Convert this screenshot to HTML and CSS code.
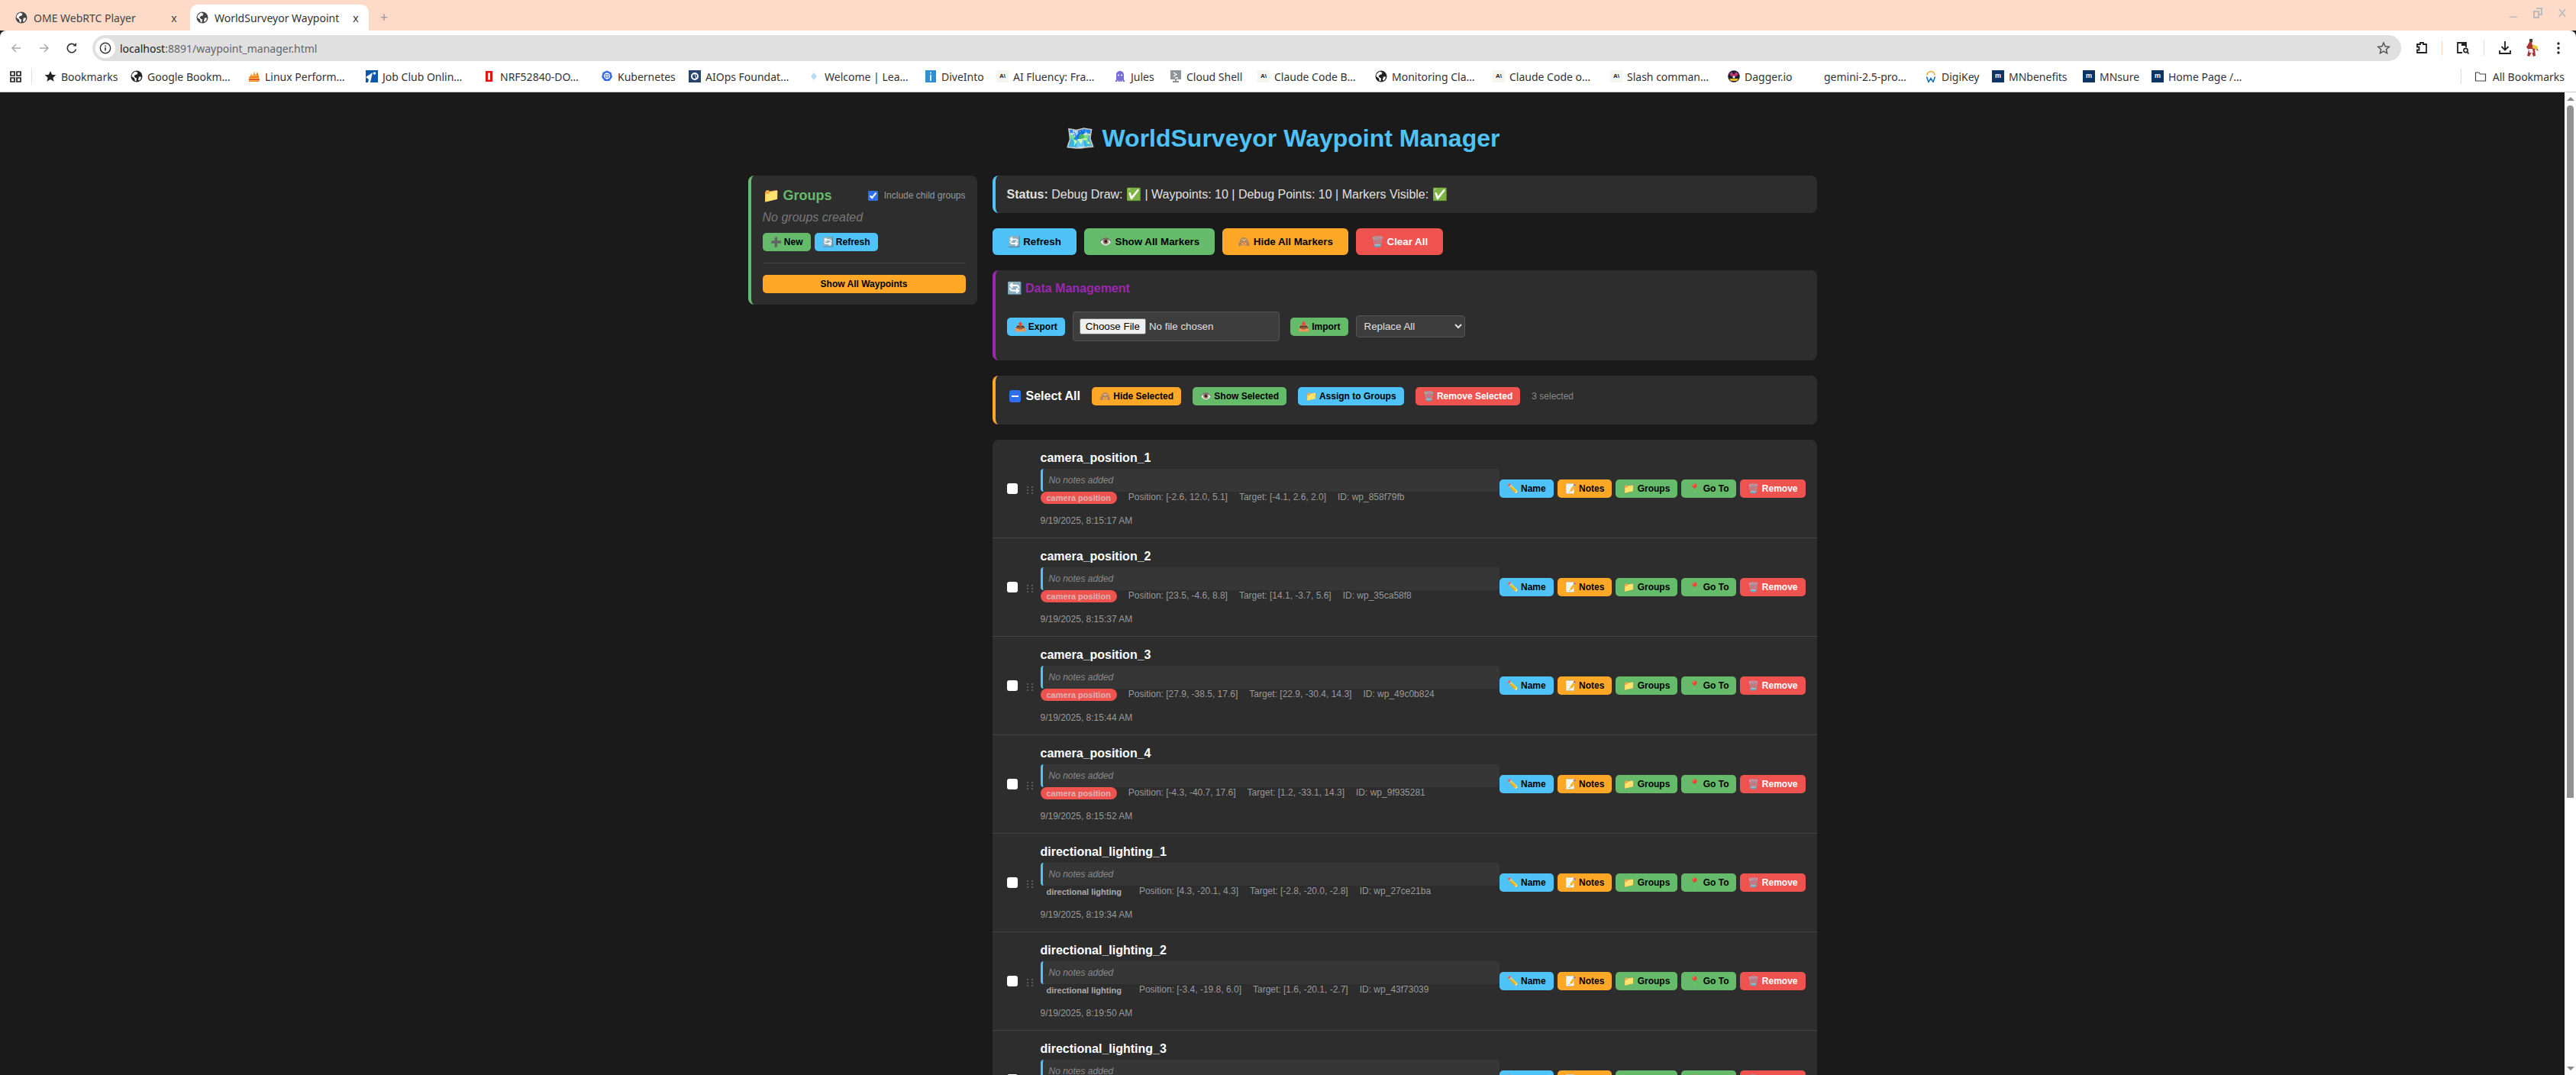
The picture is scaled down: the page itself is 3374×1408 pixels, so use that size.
FILE: index.html
```html
<!DOCTYPE html>
<html lang="en">
<head>
  <meta charset="UTF-8">
  <title>WorldSurveyor Waypoint Manager</title>
  <link rel="stylesheet" href="styles.css">
</head>
<body>
  <svg class="defs" width="0" height="0">
    <symbol id="globe" viewBox="0 0 16 16">
      <circle cx="8" cy="8" r="7.5" fill="currentColor"/>
      <path d="M6 1.5 9.5 3 8.5 5.5 6 6 4.5 8 6.5 10 8 10.5 7.5 14 6 14.500 5 10.500 1.500 8 2 5zM11 8.500h3l-.5 2.500-2 2.500-1.500-.5.500-2.500z" fill="#fff"/>
    </symbol>
    <symbol id="dots" viewBox="0 0 8 10">
      <path d="M0 0h2v2H0zM6 0h2v2H6zM0 4h2v2H0zM6 4h2v2H6zM0 8h2v2H0zM6 8h2v2H6z" fill="#5c5c5c"/>
    </symbol>
  </svg>

  <!-- browser chrome -->
  <div class="tabstrip">
    <div class="tab">
      <svg class="ico tab-ico"><use href="#globe"/></svg>
      <span class="tab-label">OME WebRTC Player</span>
      <span class="tab-x">x</span>
    </div>
    <div class="tab tab-active">
      <svg class="ico tab-ico"><use href="#globe"/></svg>
      <span class="tab-label">WorldSurveyor Waypoint</span>
      <span class="tab-x">x</span>
    </div>
    <span class="tab-new">+</span>
    <div class="winctl">
      <svg width="12" height="12" viewBox="0 0 12 12"><path d="M1 10.500h10v1.500H1z" fill="#bbb"/></svg>
      <svg width="12" height="14" viewBox="0 0 12 14"><path d="M4 1h7v8H8M1 5h6v8H1z" fill="none" stroke="#bbb" stroke-width="2"/></svg>
      <svg width="12" height="12" viewBox="0 0 12 12"><path d="M2 1l8 10M10 1 2 11" stroke="#bbb" stroke-width="1.600"/></svg>
    </div>
  </div>

  <div class="toolbar">
    <svg class="tool tool-back" width="16" height="16" viewBox="0 0 16 16"><path d="M14 8H3M8 3 3 8l5 5" fill="none" stroke="#aaa" stroke-width="1.500"/></svg>
    <svg class="tool tool-fwd" width="16" height="16" viewBox="0 0 16 16"><path d="M2 8h11M8 3l5 5-5 5" fill="none" stroke="#aaa" stroke-width="1.500"/></svg>
    <svg class="tool tool-reload" width="16" height="16" viewBox="0 0 16 16"><path d="M13.500 9.500A5.700 5.700 0 1 1 12 4" fill="none" stroke="#333" stroke-width="1.600"/><path d="M9.500 5.500h4.500V1z" fill="#333"/></svg>
    <div class="omnibox">
      <span class="site-info"><svg width="16" height="16" viewBox="0 0 16 16"><circle cx="8" cy="8" r="6.700" fill="none" stroke="#333" stroke-width="1.400"/><path d="M8 7v4.500M8 4.400v1.500" stroke="#333" stroke-width="1.500"/></svg></span>
      <span class="url"><span class="url-host">localhost</span>:8891/waypoint_manager.html</span>
      <svg class="omni-star" width="18" height="18" viewBox="0 0 18 18"><path d="M9 2l2.100 4.800 5.200.5-3.900 3.400 1.200 5.100L9 13.100l-4.600 2.700 1.200-5.100-3.900-3.400 5.200-.5z" fill="none" stroke="#555" stroke-width="1.500"/></svg>
    </div>
    <div class="tool-right">
      <svg width="16" height="18" viewBox="0 0 16 18"><path d="M2 4h4V2h4v2h4v11H2v-3.500h2.500v-4H2z" fill="none" stroke="#222" stroke-width="1.800"/></svg>
      <i class="tool-sep"></i>
      <svg width="18" height="18" viewBox="0 0 18 18"><path d="M8 15H2V2h11v6" fill="none" stroke="#222" stroke-width="1.800"/><circle cx="12.500" cy="12" r="2.600" fill="none" stroke="#222" stroke-width="1.600"/><path d="M14.500 14l2 2.500" stroke="#222" stroke-width="1.600"/><path d="M7 3h6v3H7z" fill="#222"/></svg>
      <i class="tool-sep"></i>
      <svg width="18" height="20" viewBox="0 0 18 20"><path d="M9 1v11M4.500 8 9 12.500 13.500 8M2 13v4h14v-4" fill="none" stroke="#222" stroke-width="1.800"/></svg>
      <svg class="avatar" width="20" height="26" viewBox="0 0 20 26"><path d="M8 1l3 3-1 4 6 3 3 6-5-3 1 9-3 1-2-6-3 6-3-1 2-8-3-3 4-7z" fill="#a33"/><path d="M11 8l7 3-1 4-6-2z" fill="#e8c830"/><path d="M7 1h4v4H7z" fill="#443"/><path d="M6 14h5l1 5H7z" fill="#eee"/></svg>
      <svg class="kebab" width="4" height="16" viewBox="0 0 4 16"><circle cx="2" cy="2" r="1.700" fill="#222"/><circle cx="2" cy="8" r="1.700" fill="#222"/><circle cx="2" cy="14" r="1.700" fill="#222"/></svg>
    </div>
  </div>

  <div class="bookmarks">
    <svg class="ico apps" viewBox="0 0 16 16"><path d="M2 2h5v5H2zM10 2h5v5h-5zM2 10h5v5H2zM10 10h5v5h-5z" fill="none" stroke="#222" stroke-width="1.700"/></svg>
    <i class="bm-sep"></i>
    <a class="bm bm-113"><svg class="ico" viewBox="0 0 16 16"><path d="M8 1l2.100 4.800 5.200.5-3.900 3.400 1.200 5.100L8 12.100l-4.600 2.700 1.200-5.100L.7 6.300l5.200-.5z" fill="#222"/></svg>Bookmarks</a>
    <a class="bm"><svg class="ico"><use href="#globe"/></svg>Google Bookm…</a>
    <a class="bm"><svg class="ico" viewBox="0 0 16 16"><path d="M1 15V9l2-1 1-4 1 3 2-1 1-5 1 5 2-1 1-3 1 3 1 3v7z" fill="#ef7d1f"/><path d="M1 10h14v1.500H1zM1 13h14v1H1zM4 6.500h8V8H4z" fill="#f5c242"/><path d="M1 11.500h14V13H1z" fill="#e0402b"/></svg>Linux Perform…</a>
    <a class="bm"><svg class="ico" viewBox="0 0 16 16"><path d="M0 0h16v16H0z" fill="#0b57a8"/><path d="M0 9l9-6-3 13H3l1-4z" fill="#fff"/><circle cx="11.500" cy="4" r="1.800" fill="#fff"/></svg>Job Club Onlin…</a>
    <a class="bm"><svg class="ico" viewBox="0 0 16 16"><path d="M3 1h9v14H3z" fill="#e8120c"/><path d="M6 3.500h3v9H6z" fill="#fff"/></svg>NRF52840-DO…</a>
    <a class="bm bm-115"><svg class="ico" viewBox="0 0 16 16"><path d="M8 .5l5.500 2.600 1.400 6-3.800 4.900H4.900L1.100 9.100l1.400-6z" fill="#326ce5"/><circle cx="8" cy="7.500" r="3.300" fill="none" stroke="#fff" stroke-width="1.200"/><path d="M8 3v9M3.800 7.500h8.400" stroke="#fff"/></svg>Kubernetes</a>
    <a class="bm bm-156"><svg class="ico" viewBox="0 0 16 16"><path d="M0 0h16v16H0z" fill="#26466d"/><circle cx="8" cy="8" r="4" fill="none" stroke="#fff" stroke-width="2"/><path d="M8 5l2 6" stroke="#fff"/></svg>AIOps Foundat…</a>
    <a class="bm bm-153"><svg class="ico" viewBox="0 0 16 16"><path d="M8 3l4 5-4 5-4-5z" fill="#bcdcf2"/></svg>Welcome | Lea…</a>
    <a class="bm bm-94"><svg class="ico" viewBox="0 0 16 16"><path d="M1 0h14v16H1z" fill="#2f8fd0"/><path d="M7.200 6h1.600v8H7.200zM7.200 2.500h1.600v2H7.200z" fill="#fff"/></svg>DiveInto</a>
    <a class="bm"><span class="ico ico-claude">A\</span>AI Fluency: Fra…</a>
    <a class="bm bm-73"><svg class="ico" viewBox="0 0 16 16"><path d="M8 1C4.500 1 3 3.500 3 6v6l-1.500 3h2.500l1-2 1 2h1.500l.5-2 .5 2h1.500l1-2 1 2h2.500L13 12V6c0-2.500-1.500-5-5-5z" fill="#7a6fd6"/><circle cx="6" cy="6.500" r="1" fill="#fff"/><circle cx="10" cy="6.500" r="1" fill="#fff"/></svg>Jules</a>
    <a class="bm bm-115"><svg class="ico" viewBox="0 0 16 16"><path d="M1 0h14v12H1zM7 12h2v2h3v2H4v-2h3z" fill="#8f9499"/><path d="M5 3l4 2.500L5 8M7 10h4" fill="none" stroke="#fff" stroke-width="1.300"/></svg>Cloud Shell</a>
    <a class="bm"><span class="ico ico-claude">A\</span>Claude Code B…</a>
    <a class="bm"><svg class="ico"><use href="#globe"/></svg>Monitoring Cla…</a>
    <a class="bm"><span class="ico ico-claude">A\</span>Claude Code o…</a>
    <a class="bm"><span class="ico ico-claude">A\</span>Slash comman…</a>
    <a class="bm bm-104"><svg class="ico" viewBox="0 0 16 16"><circle cx="8" cy="8" r="7.800" fill="#1d1d2b"/><path d="M2 5l3-3 3 4 3-4 3 3-3 3H5z" fill="#c4347a"/><path d="M2 11h12l-2 3H4z" fill="#e8b820"/><circle cx="8" cy="9" r="1.500" fill="#fff"/></svg>Dagger.io</a>
    <a class="bm"><span class="ico"></span>gemini-2.5-pro…</a>
    <a class="bm bm-88"><svg class="ico" viewBox="0 0 16 16"><path d="M3 6.500a5 5 0 0 1 10 0" fill="none" stroke="#f5a623" stroke-width="1.500"/><path d="M2.500 8.500l2.500 7 3-5 3 5 2.500-7" fill="none" stroke="#0b6fb8" stroke-width="1.500"/></svg>DigiKey</a>
    <a class="bm bm-119"><span class="ico ico-mn">m</span>MNbenefits</a>
    <a class="bm bm-90"><span class="ico ico-mn">m</span>MNsure</a>
    <a class="bm"><span class="ico ico-mn">m</span>Home Page /…</a>
    <div class="bm-all">
      <i class="bm-sep"></i>
      <svg class="ico" viewBox="0 0 16 16"><path d="M1.500 3h4.500l1.500 2h7v9h-13z" fill="none" stroke="#444" stroke-width="1.200"/></svg>
      All Bookmarks
    </div>
  </div>

  <div class="viewport">
    <div class="page">
      <h1 class="page-title">🗺️ WorldSurveyor Waypoint Manager</h1>

      <div class="layout">
        <aside class="sidebar">
          <div class="groups-head">
            <h3 class="groups-title">📁 Groups</h3>
            <label class="include-child"><input type="checkbox" checked> Include child groups</label>
          </div>
          <div class="no-groups">No groups created</div>
          <div class="groups-btns">
            <button class="btn btn-sm btn-green">➕ New</button>
            <button class="btn btn-sm btn-blue">🔄 Refresh</button>
          </div>
          <div class="groups-foot">
            <button class="btn btn-sm btn-orange btn-wide">Show All Waypoints</button>
          </div>
        </aside>

        <main class="main">
          <div class="status"><strong>Status:</strong> Debug Draw: ✅ | Waypoints: 10 | Debug Points: 10 | Markers Visible: ✅</div>

          <div class="controls">
            <button class="btn btn-blue">🔄 Refresh</button>
            <button class="btn btn-green">👁️ Show All Markers</button>
            <button class="btn btn-orange">🙈 Hide All Markers</button>
            <button class="btn btn-red">🗑️ Clear All</button>
          </div>

          <section class="data-mgmt">
            <h4 class="data-title">🔄 Data Management</h4>
            <div class="data-row">
              <button class="btn btn-sm btn-blue">📤 Export</button>
              <input class="file-input" type="file">
              <button class="btn btn-sm btn-green">📥 Import</button>
              <select class="mode-select"><option>Replace All</option></select>
            </div>
          </section>

          <div class="bulk">
            <input class="select-all" type="checkbox">
            <span class="select-all-label">Select All</span>
            <button class="btn btn-sm btn-orange">🙈 Hide Selected</button>
            <button class="btn btn-sm btn-green">👁️ Show Selected</button>
            <button class="btn btn-sm btn-blue">📁 Assign to Groups</button>
            <button class="btn btn-sm btn-red">🗑️ Remove Selected</button>
            <span class="sel-count">3 selected</span>
          </div>

          <div class="wp-list">
            <div class="wp">
              <input class="wp-check" type="checkbox">
              <svg class="wp-drag"><use href="#dots"/></svg>
              <div class="wp-body">
                <div class="wp-name">camera_position_1</div>
                <div class="wp-notes">No notes added</div>
                <div class="wp-meta">
                  <span class="wp-badge wp-badge-cam">camera position</span>
                  <span>Position: [-2.6, 12.0, 5.1]</span>
                  <span>Target: [-4.1, 2.6, 2.0]</span>
                  <span>ID: wp_858f79fb</span>
                  <span class="wp-date">9/19/2025, 8:15:17 AM</span>
                </div>
              </div>
              <div class="wp-actions">
                <button class="btn btn-sm btn-blue">✏️ Name</button>
                <button class="btn btn-sm btn-orange">📝 Notes</button>
                <button class="btn btn-sm btn-green">📁 Groups</button>
                <button class="btn btn-sm btn-green">📍 Go To</button>
                <button class="btn btn-sm btn-red">🗑️ Remove</button>
              </div>
            </div>

            <div class="wp">
              <input class="wp-check" type="checkbox">
              <svg class="wp-drag"><use href="#dots"/></svg>
              <div class="wp-body">
                <div class="wp-name">camera_position_2</div>
                <div class="wp-notes">No notes added</div>
                <div class="wp-meta">
                  <span class="wp-badge wp-badge-cam">camera position</span>
                  <span>Position: [23.5, -4.6, 8.8]</span>
                  <span>Target: [14.1, -3.7, 5.6]</span>
                  <span>ID: wp_35ca58f8</span>
                  <span class="wp-date">9/19/2025, 8:15:37 AM</span>
                </div>
              </div>
              <div class="wp-actions">
                <button class="btn btn-sm btn-blue">✏️ Name</button>
                <button class="btn btn-sm btn-orange">📝 Notes</button>
                <button class="btn btn-sm btn-green">📁 Groups</button>
                <button class="btn btn-sm btn-green">📍 Go To</button>
                <button class="btn btn-sm btn-red">🗑️ Remove</button>
              </div>
            </div>

            <div class="wp">
              <input class="wp-check" type="checkbox">
              <svg class="wp-drag"><use href="#dots"/></svg>
              <div class="wp-body">
                <div class="wp-name">camera_position_3</div>
                <div class="wp-notes">No notes added</div>
                <div class="wp-meta">
                  <span class="wp-badge wp-badge-cam">camera position</span>
                  <span>Position: [27.9, -38.5, 17.6]</span>
                  <span>Target: [22.9, -30.4, 14.3]</span>
                  <span>ID: wp_49c0b824</span>
                  <span class="wp-date">9/19/2025, 8:15:44 AM</span>
                </div>
              </div>
              <div class="wp-actions">
                <button class="btn btn-sm btn-blue">✏️ Name</button>
                <button class="btn btn-sm btn-orange">📝 Notes</button>
                <button class="btn btn-sm btn-green">📁 Groups</button>
                <button class="btn btn-sm btn-green">📍 Go To</button>
                <button class="btn btn-sm btn-red">🗑️ Remove</button>
              </div>
            </div>

            <div class="wp">
              <input class="wp-check" type="checkbox">
              <svg class="wp-drag"><use href="#dots"/></svg>
              <div class="wp-body">
                <div class="wp-name">camera_position_4</div>
                <div class="wp-notes">No notes added</div>
                <div class="wp-meta">
                  <span class="wp-badge wp-badge-cam">camera position</span>
                  <span>Position: [-4.3, -40.7, 17.6]</span>
                  <span>Target: [1.2, -33.1, 14.3]</span>
                  <span>ID: wp_9f935281</span>
                  <span class="wp-date">9/19/2025, 8:15:52 AM</span>
                </div>
              </div>
              <div class="wp-actions">
                <button class="btn btn-sm btn-blue">✏️ Name</button>
                <button class="btn btn-sm btn-orange">📝 Notes</button>
                <button class="btn btn-sm btn-green">📁 Groups</button>
                <button class="btn btn-sm btn-green">📍 Go To</button>
                <button class="btn btn-sm btn-red">🗑️ Remove</button>
              </div>
            </div>

            <div class="wp">
              <input class="wp-check" type="checkbox">
              <svg class="wp-drag"><use href="#dots"/></svg>
              <div class="wp-body">
                <div class="wp-name">directional_lighting_1</div>
                <div class="wp-notes">No notes added</div>
                <div class="wp-meta">
                  <span class="wp-badge">directional lighting</span>
                  <span>Position: [4.3, -20.1, 4.3]</span>
                  <span>Target: [-2.8, -20.0, -2.8]</span>
                  <span>ID: wp_27ce21ba</span>
                  <span class="wp-date">9/19/2025, 8:19:34 AM</span>
                </div>
              </div>
              <div class="wp-actions">
                <button class="btn btn-sm btn-blue">✏️ Name</button>
                <button class="btn btn-sm btn-orange">📝 Notes</button>
                <button class="btn btn-sm btn-green">📁 Groups</button>
                <button class="btn btn-sm btn-green">📍 Go To</button>
                <button class="btn btn-sm btn-red">🗑️ Remove</button>
              </div>
            </div>

            <div class="wp">
              <input class="wp-check" type="checkbox">
              <svg class="wp-drag"><use href="#dots"/></svg>
              <div class="wp-body">
                <div class="wp-name">directional_lighting_2</div>
                <div class="wp-notes">No notes added</div>
                <div class="wp-meta">
                  <span class="wp-badge">directional lighting</span>
                  <span>Position: [-3.4, -19.8, 6.0]</span>
                  <span>Target: [1.6, -20.1, -2.7]</span>
                  <span>ID: wp_43f73039</span>
                  <span class="wp-date">9/19/2025, 8:19:50 AM</span>
                </div>
              </div>
              <div class="wp-actions">
                <button class="btn btn-sm btn-blue">✏️ Name</button>
                <button class="btn btn-sm btn-orange">📝 Notes</button>
                <button class="btn btn-sm btn-green">📁 Groups</button>
                <button class="btn btn-sm btn-green">📍 Go To</button>
                <button class="btn btn-sm btn-red">🗑️ Remove</button>
              </div>
            </div>

            <div class="wp">
              <input class="wp-check" type="checkbox">
              <svg class="wp-drag"><use href="#dots"/></svg>
              <div class="wp-body">
                <div class="wp-name">directional_lighting_3</div>
                <div class="wp-notes">No notes added</div>
              </div>
              <div class="wp-actions">
                <button class="btn btn-sm btn-blue">✏️ Name</button>
                <button class="btn btn-sm btn-orange">📝 Notes</button>
                <button class="btn btn-sm btn-green">📁 Groups</button>
                <button class="btn btn-sm btn-green">📍 Go To</button>
                <button class="btn btn-sm btn-red">🗑️ Remove</button>
              </div>
            </div>
          </div>
        </main>
      </div>
    </div>

    <div class="scrollbar">
      <i class="sb-up"></i>
      <div class="sb-track"><div class="sb-thumb"></div></div>
      <i class="sb-down"></i>
    </div>
  </div>
</body>
</html>
```

FILE: styles.css
```css
* {
  box-sizing: border-box;
}

html, body {
  height: 100%;
  margin: 0;
  overflow: hidden;
}

body {
  display: flex;
  flex-direction: column;
  font-family: "Liberation Sans", Arial, sans-serif;
  background-color: #1a1a1a;
  color: #e0e0e0;
}

.defs {
  position: absolute;
}

.ico {
  display: inline-block;
  flex: none;
  width: 16px;
  height: 16px;
  color: #222;
}

/* Tab strip */
.tabstrip {
  flex: none;
  height: 40px;
  display: flex;
  align-items: flex-end;
  padding-left: 15px;
  background-color: #fddbc8;
  font-family: "Noto Sans", sans-serif;
  font-size: 14px;
  color: #444;
}

.tab {
  width: 234px;
  height: 34px;
  display: flex;
  align-items: center;
  padding: 0 14px 0 5px;
  border-radius: 10px 10px 0 0;
}

.tab-active {
  background-color: #fff;
  color: #333;
  padding: 0 10px 0 8px;
}

.tab-ico {
  margin-right: 8px;
  color: #444;
}

.tab-label {
  flex: 1;
  min-width: 0;
  white-space: nowrap;
}

.tab-x {
  width: 14px;
  text-align: center;
}

.tab-new {
  width: 40px;
  height: 34px;
  line-height: 32px;
  text-align: center;
  font-size: 18px;
  color: #999;
}

.winctl {
  margin-left: auto;
  align-self: flex-start;
  height: 34px;
  display: flex;
  align-items: center;
  gap: 20px;
  padding-right: 12px;
}

/* Toolbar */
.toolbar {
  flex: none;
  height: 40px;
  display: flex;
  align-items: flex-end;
  background-color: #fff;
  border-radius: 8px 8px 0 0;
  padding-left: 13px;
}

.tool {
  margin-bottom: 9px;
}

.tool-fwd {
  margin-left: 21px;
}

.tool-reload {
  margin-left: 20px;
  margin-right: 19px;
}

.omnibox {
  flex: 1;
  height: 34px;
  display: flex;
  align-items: center;
  background-color: #e0e0e0;
  border-radius: 17px;
  padding: 0 14px 0 4px;
  font-family: "Noto Sans", sans-serif;
  font-size: 14px;
  color: #666;
}

.site-info {
  width: 26px;
  height: 26px;
  display: flex;
  align-items: center;
  justify-content: center;
  background-color: #fff;
  border-radius: 50%;
  margin-right: 6px;
}

.url {
  flex: 1;
}

.url-host {
  color: #222;
}

.tool-right {
  width: 229px;
  height: 34px;
  display: flex;
  align-items: center;
  padding-left: 19px;
}

.tool-sep {
  width: 1px;
  height: 20px;
  background-color: #fbd5c0;
  margin: 0 18px;
}

.avatar {
  margin-left: 16px;
}

.kebab {
  margin-left: 23px;
}

/* Bookmarks bar */
.bookmarks {
  flex: none;
  height: 41px;
  display: flex;
  align-items: center;
  padding-left: 12px;
  background-color: #fff;
  border-bottom: 1px solid #c8c8c8;
  font-family: "Noto Sans", sans-serif;
  font-size: 14px;
  color: #333;
  white-space: nowrap;
}

.apps {
  margin-right: 13px;
}

.bm-sep {
  flex: none;
  width: 1px;
  height: 20px;
  background-color: #fbd5c0;
  margin-right: 16px;
}

.bm {
  flex: none;
  width: 154px;
  display: flex;
  align-items: center;
  gap: 6px;
}

.bm-73 { width: 73px; }
.bm-88 { width: 88px; }
.bm-90 { width: 90px; }
.bm-94 { width: 94px; }
.bm-104 { width: 104px; }
.bm-113 { width: 113px; }
.bm-115 { width: 115px; }
.bm-119 { width: 119px; }
.bm-153 { width: 153px; }
.bm-156 { width: 156px; }

.ico-claude {
  background-color: #f5f5f0;
  color: #222;
  font: bold 8px/16px "Liberation Sans", sans-serif;
  text-align: center;
}

.ico-mn {
  background-color: #0c3566;
  color: #fff;
  font: bold 9px/15px "Liberation Sans", sans-serif;
  text-align: center;
}

.bm-all {
  margin-left: auto;
  display: flex;
  align-items: center;
  gap: 8px;
  padding-right: 15px;
}

.bm-all .bm-sep {
  margin-right: 9px;
}

/* Page area */
.viewport {
  flex: 1;
  min-height: 0;
  display: flex;
}

.page {
  flex: 1;
  min-width: 0;
  overflow: hidden;
  padding: 20px;
  background-color: #1a1a1a;
}

.page-title {
  text-align: center;
  font-size: 32px;
  color: #4fc3f7;
  margin: 21px 0 30px;
}

.layout {
  width: 1400px;
  margin: 0 auto;
  display: flex;
  align-items: flex-start;
  gap: 20px;
}

.sidebar {
  flex: none;
  width: 300px;
  padding: 15px;
  background-color: #2d2d2d;
  border-left: 4px solid #66bb6a;
  border-radius: 8px;
}

.groups-head {
  display: flex;
  align-items: center;
  justify-content: space-between;
}

.groups-title {
  margin: 0;
  font-size: 18px;
  color: #66bb6a;
}

.include-child {
  display: flex;
  align-items: center;
  gap: 8px;
  font-size: 12px;
  color: #999;
}

.include-child input {
  margin: 0;
  accent-color: #2f6fed;
}

.no-groups {
  margin-top: 9px;
  font-size: 16px;
  font-style: italic;
  color: #777;
}

.groups-btns {
  display: flex;
  gap: 5px;
  margin-top: 11px;
}

.groups-foot {
  margin-top: 15px;
  padding-top: 15px;
  border-top: 1px solid #444;
}

.main {
  flex: 1;
  min-width: 0;
}

/* Buttons */
.btn {
  flex: none;
  height: 35px;
  border: 0;
  border-radius: 6px;
  padding: 0 20px;
  font-family: "Liberation Sans", Arial, sans-serif;
  font-size: 13.333px;
  font-weight: bold;
  color: #000;
  white-space: nowrap;
}

.btn-sm {
  height: 24px;
  padding: 0 10px;
  border-radius: 5px;
  font-size: 12px;
}

.btn-wide {
  width: 100%;
}

.btn-blue { background-color: #4fc3f7; }
.btn-green { background-color: #66bb6a; }
.btn-orange { background-color: #ffa726; }
.btn-red { background-color: #ef5350; color: #fff; }

/* Status + data */
.status {
  height: 49px;
  padding: 15px;
  background-color: #2d2d2d;
  border-left: 4px solid #4fc3f7;
  border-radius: 8px;
  font-size: 16px;
  color: #e0e0e0;
}

.controls {
  display: flex;
  gap: 10px;
  margin: 20px 0;
}

.data-mgmt {
  height: 118px;
  padding: 15px 15px 25px;
  background-color: #2d2d2d;
  border-left: 4px solid #9c27b0;
  border-radius: 8px;
}

.data-title {
  margin: 0 0 21px;
  font-size: 16px;
  line-height: 18px;
  color: #9c27b0;
}

.data-row {
  display: flex;
  align-items: center;
  gap: 10px;
}

.file-input {
  width: 271px;
  height: 39px;
  margin-right: 4px;
  padding: 8px;
  background-color: #3d3d3d;
  border: 1px solid #555;
  border-radius: 4px;
  color: #e0e0e0;
  font-size: 13.333px;
  font-family: "Liberation Sans", Arial, sans-serif;
}

.mode-select {
  width: 143px;
  height: 29px;
  padding: 0 6px;
  background-color: #3d3d3d;
  border: 1px solid #555;
  border-radius: 4px;
  color: #e0e0e0;
  font-size: 13.333px;
  font-family: "Liberation Sans", Arial, sans-serif;
}

/* Bulk actions bar */
.bulk {
  height: 64px;
  display: flex;
  align-items: center;
  margin-top: 20px;
  padding: 15px 15px 25px;
  background-color: #2d2d2d;
  border-left: 4px solid #ffa726;
  border-radius: 8px;
  gap: 15px;
}

.select-all {
  appearance: none;
  flex: none;
  width: 15px;
  height: 16px;
  margin: 0 -8px 0 3px;
  background-color: #2f6fed;
  border-radius: 3px;
  display: flex;
  align-items: center;
  justify-content: center;
}

.select-all::before {
  content: "";
  width: 9px;
  height: 2px;
  background-color: #fff;
}

.select-all-label {
  font-size: 16px;
  font-weight: bold;
  color: #fff;
}

.sel-count {
  font-size: 12px;
  color: #888;
}

/* Waypoint list */
.wp-list {
  margin-top: 20px;
  background-color: #2d2d2d;
  border-radius: 8px;
}

.wp {
  height: 129px;
  display: flex;
  align-items: center;
  padding: 15px;
  border-bottom: 1px solid #444;
}

.wp-check {
  appearance: none;
  flex: none;
  width: 14px;
  height: 14px;
  margin: 0 12px 0 4px;
  background-color: #fff;
  border-radius: 3px;
}

.wp-drag {
  flex: none;
  width: 8px;
  height: 10px;
  margin: 4px 10px 0 0;
}

.wp-body {
  flex: 1;
  min-width: 0;
  align-self: flex-start;
}

.wp-name {
  font-size: 16px;
  line-height: 18px;
  font-weight: bold;
  color: #fff;
}

.wp-notes {
  height: 30px;
  margin-top: 5px;
  padding: 8px;
  background-color: #363636;
  border-left: 3px solid #4fc3f7;
  border-radius: 4px;
  font-size: 12px;
  line-height: 14px;
  font-style: italic;
  color: #888;
}

.wp-meta {
  display: flex;
  flex-wrap: wrap;
  align-items: flex-start;
  gap: 15px;
  font-size: 12px;
  line-height: 14px;
  color: #999;
}

.wp-badge {
  height: 16px;
  padding: 2px 8px;
  border-radius: 10px;
  font-size: 11px;
  font-weight: bold;
  line-height: 12px;
  color: #aaa;
}

.wp-badge-cam {
  background-color: #ef5350;
  color: #d8b4b4;
}

.wp-date {
  flex-basis: 100%;
}

.wp-actions {
  flex: none;
  display: flex;
  gap: 5px;
}

/* Fake window scrollbar */
.scrollbar {
  flex: none;
  width: 15px;
  display: flex;
  flex-direction: column;
  align-items: center;
  background-color: #fff;
}

.sb-up, .sb-down {
  flex: none;
  width: 0;
  height: 0;
  border-left: 5px solid transparent;
  border-right: 5px solid transparent;
}

.sb-up {
  margin-top: 6px;
  border-bottom: 5px solid #888;
}

.sb-down {
  margin-bottom: 6px;
  border-top: 5px solid #888;
}

.sb-track {
  flex: 1;
  width: 9px;
  padding: 6px 0;
}

.sb-thumb {
  height: 907px;
  background-color: #929292;
  border-radius: 5px 5px 0 0;
}
```
